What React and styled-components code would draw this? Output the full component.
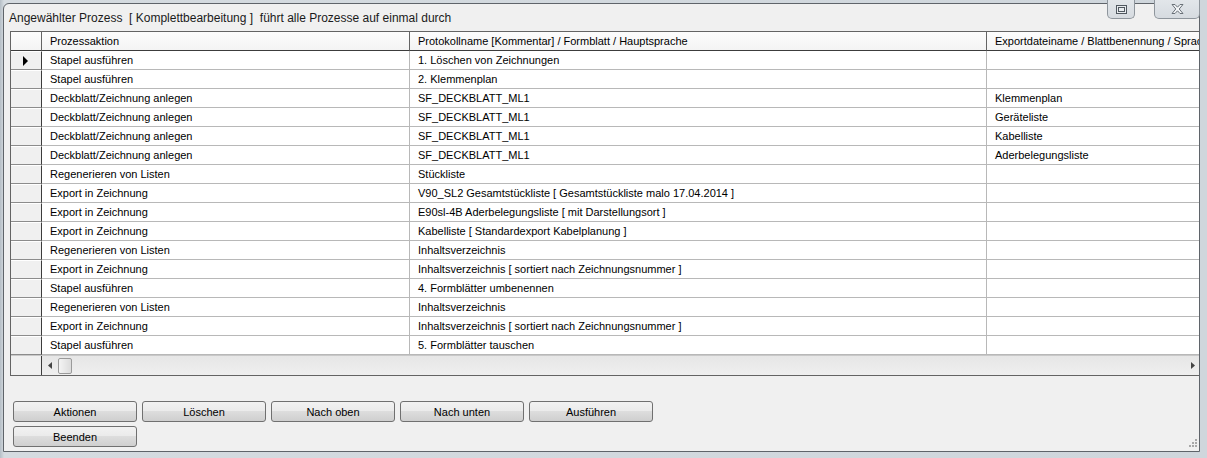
import React from "react";
import styled, { createGlobalStyle } from "styled-components";

const GlobalStyle = createGlobalStyle`
  html, body {
    margin: 0;
    padding: 0;
    background: #c3cbd2;
    font-family: "Liberation Sans", Arial, sans-serif;
    font-size: 11px;
    color: #000;
  }
`;

const Frame = styled.div`
  position: relative;
  width: 1207px;
  height: 458px;
  box-sizing: border-box;
  padding: 3px 7px 6px 3px;
  background: linear-gradient(90deg, #b5bec6 0px, #d5dbe0 4px, #cfd6dc 100%);
  overflow: hidden;
`;

const Window = styled.div`
  height: 100%;
  box-sizing: border-box;
  border: 1px solid #5f646a;
  border-radius: 6px 6px 0 0;
  background: #f0f0f0;
  display: flex;
  flex-direction: column;
`;

const Title = styled.div`
  height: 27px;
  padding-left: 5px;
  display: flex;
  align-items: center;
  font-size: 12px;
  color: #1a1a1a;
  white-space: pre;
`;

const CaptionButton = styled.div`
  position: absolute;
  top: 0;
  left: ${(p) => p.$left}px;
  width: ${(p) => p.$width}px;
  height: 19px;
  box-sizing: border-box;
  border: 1px solid #8e959c;
  border-top: none;
  border-radius: 0 0 5px 5px;
  background: linear-gradient(#e2e6ea, #d6dbe0);
  display: flex;
  align-items: center;
  justify-content: center;
`;

const Grid = styled.div`
  margin-left: 6px;
  height: 345px;
  box-sizing: border-box;
  border: 1px solid #646464;
  border-right: none;
  background: #fff;
  display: flex;
  flex-direction: column;
  overflow: hidden;
`;

const Row = styled.div`
  display: grid;
  grid-template-columns: 31px 368px 577px 1fr;
  height: 19px;
  flex: none;
`;

const HeaderCell = styled.div`
  box-sizing: border-box;
  border-right: ${(p) => (p.$last ? "none" : "1px solid #646464")};
  border-bottom: 1px solid #3c3c3c;
  background: linear-gradient(#fdfdfd, #f4f4f4);
  padding-left: 8px;
  display: flex;
  align-items: center;
  white-space: nowrap;
  overflow: hidden;
`;

const RowHead = styled.div`
  box-sizing: border-box;
  border-right: 1px solid #3c3c3c;
  border-bottom: 1px solid #8c8c8c;
  border-top: 1px solid #fff;
  background: #f0f0f0;
  display: flex;
  align-items: center;
  justify-content: center;
`;

const Cell = styled.div`
  box-sizing: border-box;
  border-right: ${(p) => (p.$last ? "none" : "1px solid #b8b8b8")};
  border-bottom: 1px solid #b8b8b8;
  padding-left: 8px;
  display: flex;
  align-items: center;
  white-space: nowrap;
  overflow: hidden;
`;

const ScrollRow = styled.div`
  display: grid;
  grid-template-columns: 31px 1fr;
  height: 19px;
  flex: none;
  border-top: 1px solid #c8c8c8;
`;

const Corner = styled.div`
  background: #f0f0f0;
  border-right: 1px solid #3c3c3c;
`;

const ScrollBar = styled.div`
  background: linear-gradient(#e6e6e6, #efefef);
  display: flex;
  align-items: center;
  padding: 0 4px 0 6px;
  gap: 6px;
`;

const Thumb = styled.div`
  width: 14px;
  height: 16px;
  box-sizing: border-box;
  border: 1px solid #9a9a9a;
  border-radius: 2px;
  background: linear-gradient(90deg, #f4f4f4, #dcdcdc);
`;

const Spacer = styled.div`
  flex: 1;
`;

const Buttons = styled.div`
  margin: 25px 0 0 9px;
  display: grid;
  grid-template-columns: repeat(5, 124px);
  column-gap: 5px;
  row-gap: 4px;
`;

const Button = styled.button`
  height: 21px;
  box-sizing: border-box;
  border: 1px solid #707070;
  border-radius: 3px;
  background: linear-gradient(#f2f2f2 0%, #ebebeb 45%, #dddddd 50%, #cfcfcf 100%);
  font-family: "Liberation Sans", Arial, sans-serif;
  font-size: 11px;
  color: #000;
  padding: 0;
`;

const Grip = styled.svg`
  position: absolute;
  right: 10px;
  bottom: 9px;
`;

const rows = [
  ["Stapel ausführen", "1. Löschen von Zeichnungen", ""],
  ["Stapel ausführen", "2. Klemmenplan", ""],
  ["Deckblatt/Zeichnung anlegen", "SF_DECKBLATT_ML1", "Klemmenplan"],
  ["Deckblatt/Zeichnung anlegen", "SF_DECKBLATT_ML1", "Geräteliste"],
  ["Deckblatt/Zeichnung anlegen", "SF_DECKBLATT_ML1", "Kabelliste"],
  ["Deckblatt/Zeichnung anlegen", "SF_DECKBLATT_ML1", "Aderbelegungsliste"],
  ["Regenerieren von Listen", "Stückliste", ""],
  ["Export in Zeichnung", "V90_SL2 Gesamtstückliste [ Gesamtstückliste malo 17.04.2014 ]", ""],
  ["Export in Zeichnung", "E90sl-4B Aderbelegungsliste [ mit Darstellungsort ]", ""],
  ["Export in Zeichnung", "Kabelliste [ Standardexport Kabelplanung ]", ""],
  ["Regenerieren von Listen", "Inhaltsverzeichnis", ""],
  ["Export in Zeichnung", "Inhaltsverzeichnis [ sortiert nach Zeichnungsnummer ]", ""],
  ["Stapel ausführen", "4. Formblätter umbenennen", ""],
  ["Regenerieren von Listen", "Inhaltsverzeichnis", ""],
  ["Export in Zeichnung", "Inhaltsverzeichnis [ sortiert nach Zeichnungsnummer ]", ""],
  ["Stapel ausführen", "5. Formblätter tauschen", ""],
];

const buttons = ["Aktionen", "Löschen", "Nach oben", "Nach unten", "Ausführen", "Beenden"];

export default function App() {
  return (
    <>
      <GlobalStyle />
      <Frame>
        <Window>
          <Title>Angewählter Prozess  [ Komplettbearbeitung ]  führt alle Prozesse auf einmal durch</Title>
          <Grid>
            <Row>
              <HeaderCell />
              <HeaderCell>Prozessaktion</HeaderCell>
              <HeaderCell>Protokollname [Kommentar] / Formblatt / Hauptsprache</HeaderCell>
              <HeaderCell $last>Exportdateiname / Blattbenennung / Sprache</HeaderCell>
            </Row>
            {rows.map((r, i) => (
              <Row key={i}>
                <RowHead>
                  {i === 0 && (
                    <svg width="6" height="10" viewBox="0 0 6 10">
                      <path d="M0 0 L5 5 L0 10 Z" fill="#000" />
                    </svg>
                  )}
                </RowHead>
                <Cell>{r[0]}</Cell>
                <Cell>{r[1]}</Cell>
                <Cell $last>{r[2]}</Cell>
              </Row>
            ))}
            <ScrollRow>
              <Corner />
              <ScrollBar>
                <svg width="4" height="7" viewBox="0 0 4 7">
                  <path d="M4 0 L0 3.5 L4 7 Z" fill="#444" />
                </svg>
                <Thumb />
                <Spacer />
                <svg width="4" height="7" viewBox="0 0 4 7">
                  <path d="M0 0 L4 3.5 L0 7 Z" fill="#444" />
                </svg>
              </ScrollBar>
            </ScrollRow>
          </Grid>
          <Buttons>
            {buttons.map((b) => (
              <Button key={b}>{b}</Button>
            ))}
          </Buttons>
        </Window>
        <CaptionButton $left={1107} $width={28}>
          <svg width="11" height="9" viewBox="0 0 11 9">
            <rect x="0.5" y="0.5" width="10" height="8" fill="#e8ecef" stroke="#505860" />
            <rect x="2.5" y="2.5" width="6" height="4" fill="none" stroke="#505860" />
          </svg>
        </CaptionButton>
        <CaptionButton $left={1154} $width={46}>
          <svg width="13" height="10" viewBox="0 0 13 10">
            <path
              d="M1 0.5 H4 L6.5 3.2 L9 0.5 H12 L8.2 5 L12 9.5 H9 L6.5 6.8 L4 9.5 H1 L4.8 5 Z"
              fill="#f4f6f8"
              stroke="#6a7178"
              strokeWidth="1"
            />
          </svg>
        </CaptionButton>
        <Grip width="10" height="10" viewBox="0 0 10 10">
          {[
            [8, 0],
            [8, 3],
            [5, 3],
            [8, 6],
            [5, 6],
            [2, 6],
          ].map(([x, y]) => (
            <rect key={`${x}-${y}`} x={x} y={y} width="2" height="2" fill="#a8a8a8" />
          ))}
        </Grip>
      </Frame>
    </>
  );
}
